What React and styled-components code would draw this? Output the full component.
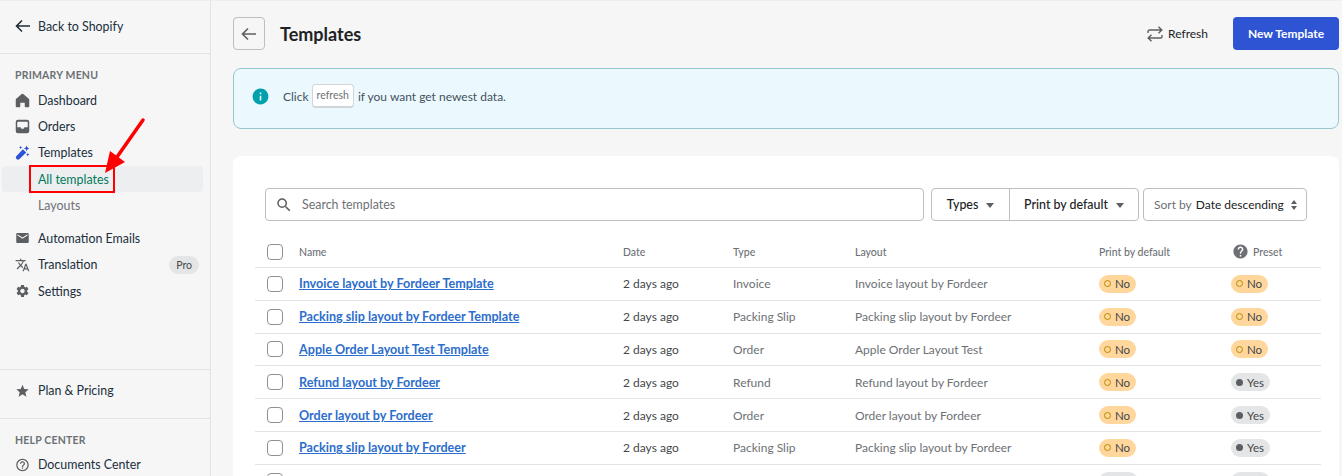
import React from 'react';
import styled, { createGlobalStyle } from 'styled-components';
import { MdTranslate, MdSettings, MdStar, MdEmail, MdHelpOutline, MdHelp, MdInfo, MdSearch } from 'react-icons/md';

const GlobalStyle = createGlobalStyle`
    * { box-sizing:border-box; }
    html, body { margin:0; padding:0; height:100%; overflow:hidden; }
    body { background:#f6f6f7; color:#202223; font-family:Lato, "Noto Sans", sans-serif; font-size:12.4px; }
`;

const Page = styled.div`
    display:flex; width:1342px; height:476px; overflow:hidden;
    border-top:1px solid #eeeeef;
`;

const Sidebar = styled.aside`
    position:relative;
    flex:0 0 211px; height:100%;
    border-right:1px solid #e1e3e5;
    display:flex; flex-direction:column;
    > * { flex:none; }
`;

const BackRow = styled.div`
    height:53px; padding:0 15px 2px;
    display:flex; align-items:center; gap:7px;
    border-bottom:1px solid #e1e3e5;
    color:#202e3a;
`;

const SectionTitle = styled.div`
    margin:14px 0 0 15px; height:14px; line-height:14px;
    font-size:10.5px; font-weight:700; color:#6d7175; text-transform:uppercase; letter-spacing:.2px;
`;

const Menu = styled.nav`
    display:flex; flex-direction:column;
    margin-top:${p => p.$top || 0}px;
    padding-bottom:${p => p.$bottom || 0}px;
    border-bottom:${p => p.$line ? '1px solid #e1e3e5' : 'none'};
    > * { flex:none; }
`;

const MenuItem = styled.div`
    height:26.4px; padding:0 11px 0 15px;
    display:flex; align-items:center; gap:8px;
    color:#202e3a;
    margin-top:${p => p.$gap || 0}px;
    svg { flex:0 0 15px; color:#5c5f62; }
`;

const SubItem = styled.div`
    height:26px; margin:0 7px 0 2px; padding-left:36px;
    display:flex; align-items:center;
    border-radius:4px;
    color:${p => p.$active ? '#007a5c' : '#6d7175'};
    background:${p => p.$active ? '#edeeef' : 'transparent'};
`;

const ProTag = styled.span`
    margin-left:auto; padding:0 7px; height:18px; line-height:18px;
    border-radius:9px; background:#e4e5e7; font-size:10.5px; color:#44474a;
`;

const RedBox = styled.div`
    position:absolute; left:29px; top:164px; width:86px; height:28px;
    border:2px solid #f00;
`;

const RedArrow = styled.svg`
    position:absolute; left:100px; top:112px;
`;

const Main = styled.main`
    flex:1; min-width:0; padding:16px 3px 0 22px;
    display:flex; flex-direction:column;
    > * { flex:none; }
`;

const TopBar = styled.header`
    display:flex; align-items:center; height:33px;
`;

const IconButton = styled.button`
    width:32px; height:33px; padding:0;
    display:flex; align-items:center; justify-content:center;
    border:1px solid #babfc3; border-radius:4px; background:transparent; color:#5c5f62;
`;

const Title = styled.h1`
    margin:0 0 0 15px; font-size:18px; font-weight:700; color:#202223;
`;

const RefreshAction = styled.div`
    margin-left:auto; margin-right:25px;
    display:flex; align-items:center; gap:5px; color:#202223; font-size:12px;
    svg { color:#5c5f62; }
`;

const PrimaryButton = styled.button`
    width:106px; height:33px; padding:0;
    border:none; border-radius:4px; background:#2e54d4; color:#fff;
    font:700 12px Lato, sans-serif;
`;

const Banner = styled.div`
    margin-top:18px; height:61px; padding:0 17px 5px;
    display:flex; align-items:center; gap:4px;
    border:1px solid #98c6cd; border-radius:8px; background:#ebf9fe;
    color:#44515c; font-size:12px;
    svg { color:#00a0ac; margin-right:9px; }
`;

const Kbd = styled.span`
    height:24px; line-height:21px; padding:0 4px; margin-left:-1px;
    border:1px solid #d2d5d8; border-bottom-width:2px; border-radius:4px; background:#fff;
    font-size:10.5px; color:#6d7175;
`;

const Card = styled.section`
    margin-top:27px; padding:32px 18px 0 22px;
    background:#fff; border-radius:8px 8px 0 0;
    height:400px;
`;

const FilterRow = styled.div`
    display:flex; gap:4px; margin:0 14px 0 10px; height:33px;
`;

const SearchBox = styled.div`
    flex:1; margin-right:3px; padding:0 9px;
    display:flex; align-items:center; gap:9px;
    border:1px solid #babfc3; border-radius:4px;
    color:#6d7175;
    svg { color:#5c5f62; }
`;

const ButtonGroup = styled.div`
    display:flex; flex:0 0 208px;
    border:1px solid #babfc3; border-radius:4px;
`;

const GroupButton = styled.div`
    flex:${p => p.$wide ? 1 : '0 0 77px'};
    display:flex; align-items:center; justify-content:center; gap:8px;
    font-weight:500; color:#202223;
    & + & { border-left:1px solid #babfc3; }
`;

const Caret = styled.span`
    width:0; height:0; margin-top:2px;
    border:4px solid transparent; border-top:5px solid #5c5f62; border-bottom:none;
`;

const SortBox = styled.div`
    flex:0 0 164px; padding:0 8px 0 10px;
    display:flex; align-items:center; gap:4px;
    border:1px solid #babfc3; border-radius:4px;
    white-space:nowrap; font-size:12px;
    span { color:#6d7175; }
    svg { margin-left:auto; color:#5c5f62; }
`;

const Row = styled.div`
    display:grid;
    grid-template-columns:44px 324px 110px 122px 244px 132px 90px;
    align-items:center;
    height:${p => p.$head ? 32 : 32.8}px;
    border-bottom:1px solid #e1e3e5;
    color:#6d7175; font-size:12px;
`;

const TableHead = styled(Row)`
    margin-top:15px; font-size:10.5px; font-weight:500; color:#6d7175;
`;

const CheckCell = styled.div`
    padding-left:12px; display:flex;
`;

const Checkbox = styled.span`
    width:16px; height:16px; border:1px solid #8c9196; border-radius:4px; background:#fff;
`;

const NameLink = styled.a`
    color:#2c6ecb; font-size:12.6px; font-weight:700; text-decoration:underline;
`;

const DateCell = styled.span`
    color:#44474a;
`;

const Pill = styled.span`
    display:inline-flex; align-items:center; gap:4px;
    height:18px; padding:0 6px 0 5px; border-radius:9px;
    font-size:11.5px; color:#44474a;
    background:${p => p.$on ? '#e4e5e7' : '#ffd79d'};
    i {
        width:7px; height:7px; border-radius:50%;
        background:${p => p.$on ? '#5c5f62' : 'transparent'};
        border:${p => p.$on ? 'none' : '1.5px solid #b98900'};
    }
`;

const PresetHead = styled.span`
    display:flex; align-items:center; gap:4px; margin-left:1px;
    svg { color:#6d7175; }
`;

const ArrowLeft = ({ size = 16 }) => (
    <svg width={size} height={size} viewBox="0 0 16 16" fill="none" stroke="currentColor" strokeWidth="1.6">
        <path d="M15 8H1.500M7 2.500 1.500 8 7 13.500" />
    </svg>
);

const HomeIcon = () => (
    <svg width="15" height="15" viewBox="0 0 20 20" fill="currentColor">
        <path d="M19 8.700V17.500c0 .8-.7 1.500-1.500 1.500H14a1 1 0 0 1-1-1v-5H7v5a1 1 0 0 1-1 1H2.500C1.700 19 1 18.300 1 17.500V8.700c0-.5.200-.9.600-1.200L9 1.300a1.500 1.500 0 0 1 2 0l7.400 6.200c.4.300.6.700.6 1.200z" />
    </svg>
);

const InboxIcon = () => (
    <svg width="15" height="15" viewBox="0 0 20 20" fill="currentColor">
        <path fillRule="evenodd" d="M4 1h12a3 3 0 0 1 3 3v12a3 3 0 0 1-3 3H4a3 3 0 0 1-3-3V4a3 3 0 0 1 3-3zm0 2.500a1 1 0 0 0-1 1V11h4.500l1 2h3l1-2H17V4.500a1 1 0 0 0-1-1H4z" />
    </svg>
);

const WandIcon = () => (
    <svg width="15" height="15" viewBox="0 0 20 20" style={{ color: '#2e54d4' }} fill="currentColor">
        <path d="M10.500 5.500 15 10 6 18.600a2.600 2.600 0 0 1-4-3.800z" />
        <path d="M15.500 .8l1.200 2.500 2.500 1.200-2.500 1.200-1.200 2.500-1.200-2.500-2.500-1.200 2.500-1.200zM7.500 1l.7 1.600L9.800 3.300l-1.600.7L7.500 5.600l-.7-1.600-1.600-.7 1.600-.7zM17 10.500l.7 1.600 1.600.7-1.600.7L17 15.100l-.7-1.600-1.600-.7 1.600-.7z" />
    </svg>
);

const SwapIcon = () => (
    <svg width="16" height="16" viewBox="0 0 16 16" fill="none" stroke="currentColor" strokeWidth="1.400">
        <path d="M1 7V5.500A1.500 1.500 0 0 1 2.500 4H15M11.500 .8 14.800 4l-3.300 3.200M15 9v1.500a1.500 1.500 0 0 1-1.500 1.500H1M4.500 8.800 1.200 12l3.300 3.200" />
    </svg>
);

const SortIcon = () => (
    <svg width="8" height="12" viewBox="0 0 8 12" fill="currentColor">
        <path d="M4 1 7 5H1zM4 11 1 7h6z" />
    </svg>
);

const rows = [
    ['Invoice layout by Fordeer Template', 'Invoice', 'Invoice layout by Fordeer', false],
    ['Packing slip layout by Fordeer Template', 'Packing Slip', 'Packing slip layout by Fordeer', false],
    ['Apple Order Layout Test Template', 'Order', 'Apple Order Layout Test', false],
    ['Refund layout by Fordeer', 'Refund', 'Refund layout by Fordeer', true],
    ['Order layout by Fordeer', 'Order', 'Order layout by Fordeer', true],
    ['Packing slip layout by Fordeer', 'Packing Slip', 'Packing slip layout by Fordeer', true],
];

const YesNo = ({ on }) => <Pill $on={on}><i />{on ? 'Yes' : 'No'}</Pill>;

export default function App() {
    return (
        <Page>
            <GlobalStyle />
            <Sidebar>
                <BackRow><ArrowLeft />Back to Shopify</BackRow>
                <SectionTitle>Primary menu</SectionTitle>
                <Menu $top={5} $bottom={65} $line>
                    <MenuItem><HomeIcon />Dashboard</MenuItem>
                    <MenuItem><InboxIcon />Orders</MenuItem>
                    <MenuItem><WandIcon />Templates</MenuItem>
                    <SubItem $active>All templates</SubItem>
                    <SubItem>Layouts</SubItem>
                    <MenuItem $gap={7}><MdEmail size={16} />Automation Emails</MenuItem>
                    <MenuItem><MdTranslate size={16} />Translation<ProTag>Pro</ProTag></MenuItem>
                    <MenuItem><MdSettings size={16} />Settings</MenuItem>
                </Menu>
                <Menu $top={7} $bottom={14} $line>
                    <MenuItem><MdStar size={18} />Plan &amp; Pricing</MenuItem>
                </Menu>
                <SectionTitle>Help center</SectionTitle>
                <Menu $top={5}>
                    <MenuItem><MdHelpOutline size={16} />Documents Center</MenuItem>
                </Menu>
                <RedBox />
                <RedArrow width="50" height="66" viewBox="0 0 50 66">
                    <path d="M43 7 17 44" stroke="#f00" strokeWidth="3.500" strokeLinecap="round" fill="none" />
                    <path d="M5 60 10 38 25 49z" fill="#f00" />
                </RedArrow>
            </Sidebar>
            <Main>
                <TopBar>
                    <IconButton><ArrowLeft /></IconButton>
                    <Title>Templates</Title>
                    <RefreshAction><SwapIcon />Refresh</RefreshAction>
                    <PrimaryButton>New Template</PrimaryButton>
                </TopBar>
                <Banner>
                    <MdInfo size={19} />Click <Kbd>refresh</Kbd> if you want get newest data.
                </Banner>
                <Card>
                    <FilterRow>
                        <SearchBox><MdSearch size={18} />Search templates</SearchBox>
                        <ButtonGroup>
                            <GroupButton>Types <Caret /></GroupButton>
                            <GroupButton $wide>Print by default <Caret /></GroupButton>
                        </ButtonGroup>
                        <SortBox><span>Sort by</span>Date descending<SortIcon /></SortBox>
                    </FilterRow>
                    <TableHead $head>
                        <CheckCell><Checkbox /></CheckCell>
                        <span>Name</span><span>Date</span><span>Type</span><span>Layout</span>
                        <span>Print by default</span>
                        <PresetHead><MdHelp size={17} />Preset</PresetHead>
                    </TableHead>
                    {rows.map(([name, type, layout, preset]) => (
                        <Row key={name}>
                            <CheckCell><Checkbox /></CheckCell>
                            <span><NameLink>{name}</NameLink></span>
                            <DateCell>2 days ago</DateCell>
                            <span>{type}</span>
                            <span>{layout}</span>
                            <span><YesNo on={false} /></span>
                            <span><YesNo on={preset} /></span>
                        </Row>
                    ))}
                    <Row>
                        <CheckCell><Checkbox /></CheckCell>
                        <span /><span /><span /><span />
                        <span><YesNo on /></span>
                        <span><YesNo on /></span>
                    </Row>
                </Card>
            </Main>
        </Page>
    );
}
